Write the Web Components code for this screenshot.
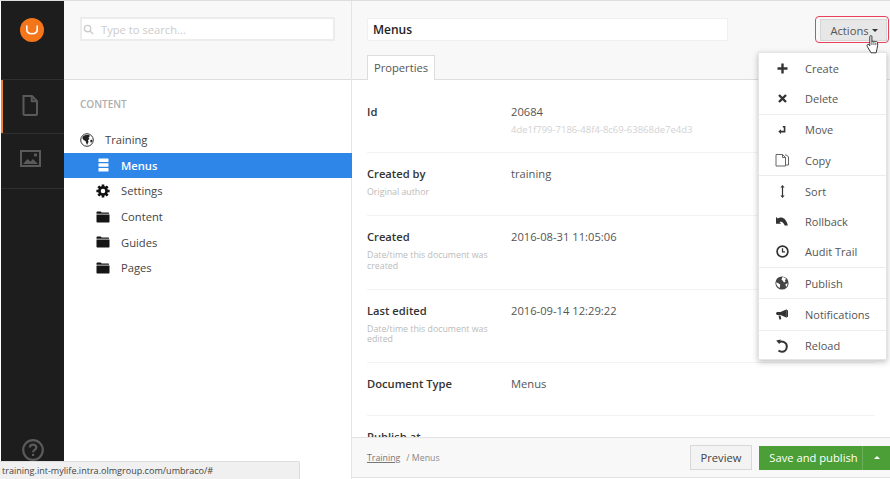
<!DOCTYPE html>
<html>
<head>
<meta charset="utf-8">
<title>Menus</title>
<style>
  html, body { margin: 0; height: 100%; overflow: hidden; background: #fff; }
  body { font-family: "Open Sans", "Liberation Sans", sans-serif; font-size: 11px; color: #555; }
</style>
</head>
<body>
<umb-app>
  <umb-sidebar slot="sidebar"></umb-sidebar>
  <umb-tree slot="tree">
    <tree-item icon="globe" root>Training</tree-item>
    <tree-item icon="list" active>Menus</tree-item>
    <tree-item icon="gear">Settings</tree-item>
    <tree-item icon="folder">Content</tree-item>
    <tree-item icon="folder">Guides</tree-item>
    <tree-item icon="folder">Pages</tree-item>
  </umb-tree>
  <umb-editor slot="editor">
    <prop-row label="Id" first>20684<div slot="sub">4de1f799-7186-48f4-8c69-63868de7e4d3</div></prop-row>
    <prop-row label="Created by" desc="Original author">training</prop-row>
    <prop-row label="Created" desc="Date/time this document was created">2016-08-31 11:05:06</prop-row>
    <prop-row label="Last edited" desc="Date/time this document was edited">2016-09-14 12:29:22</prop-row>
    <prop-row label="Document Type">Menus</prop-row>
    <prop-row label="Publish at"></prop-row>
  </umb-editor>
  <action-menu slot="overlay">
    <action-item icon="plus">Create</action-item>
    <action-item icon="cross" sep>Delete</action-item>
    <action-item icon="move">Move</action-item>
    <action-item icon="copy" sep>Copy</action-item>
    <action-item icon="sort">Sort</action-item>
    <action-item icon="rollback">Rollback</action-item>
    <action-item icon="clock" sep>Audit Trail</action-item>
    <action-item icon="world" sep>Publish</action-item>
    <action-item icon="megaphone" sep>Notifications</action-item>
    <action-item icon="reload">Reload</action-item>
  </action-menu>
  <status-bar slot="overlay">training.int-mylife.intra.olmgroup.com/umbraco/#</status-bar>
</umb-app>

<script>
const ICONS = {
  search: '<svg viewBox="0 0 12 12" fill="none" stroke="#ccc" stroke-width="1.5"><circle cx="5" cy="5" r="3.5"/><path d="M7.6 7.6L11 11"/></svg>',
  globe: '<svg viewBox="0 0 14 14"><circle cx="7" cy="7" r="6.3" fill="#fff" stroke="#333" stroke-width="1"/><path d="M2.5 4C4 2 7 1.4 9 2l1 1-1.5 1.5L9.5 6 8 7l.5 2-1.5 3-1-2.5L5.5 8 3.5 7 2.5 5.5zM10 7.5l2-1 .5 1.5-1.5 2z" fill="#222"/></svg>',
  list: '<svg viewBox="0 0 11 14" fill="#fff"><rect x="0.5" y="0.5" width="10" height="3.4" rx=".5"/><rect x="0.5" y="5.3" width="10" height="3.4" rx=".5"/><rect x="0.5" y="10.1" width="10" height="3.4" rx=".5"/></svg>',
  gear: '<svg viewBox="0 0 14 14" fill="none" stroke="#111"><circle cx="7" cy="7" r="3.6" stroke-width="2.6"/><path stroke-width="2.6" d="M7 .4v2.4M7 11.2v2.4M.4 7h2.4M11.2 7h2.4M2.3 2.3L4 4M10 10l1.7 1.7M11.7 2.3L10 4M4 10l-1.7 1.700"/></svg>',
  folder: '<svg viewBox="0 0 14 12" fill="#151515"><path d="M.5 1.2C.5.7.8.4 1.3.4h3.4l1 1.2h6.6c.5 0 .8.3.8.8v.3H.5z"/><path d="M.5 3.4h13v7.4c0 .5-.3.8-.8.8H1.3c-.5 0-.8-.3-.8-.8z"/></svg>',
  plus: '<svg viewBox="0 0 11 11" fill="none" stroke="#333" stroke-width="2.4"><path d="M5.5.5v10M.5 5.5h10"/></svg>',
  cross: '<svg viewBox="0 0 9 9" fill="none" stroke="#333" stroke-width="2.4"><path d="M1 1l7 7M8 1L1 8"/></svg>',
  move: '<svg viewBox="0 0 8 8" fill="none" stroke="#333" stroke-width="1.6"><path d="M4.800 .8h1.800v4.800H2"/><path d="M3 3.200L.3 5.600 3 8" fill="#333" stroke="none"/></svg>',
  copy: '<svg viewBox="0 0 14 14" fill="#fff" stroke="#555" stroke-width=".9"><path d="M10 2h1.5L13.5 4v8H11"/><path d="M1 1.5h6.5L10.5 4.5v8.5H1z"/><path d="M7.5 1.5v3h3" fill="none"/></svg>',
  sort: '<svg viewBox="0 0 5 13" fill="#333"><path d="M2.500 0L4.600 2.600H3.100v7.800h1.500L2.500 13 .4 10.400h1.500V2.600H.4z"/></svg>',
  rollback: '<svg viewBox="0 0 12 9" fill="#333"><path d="M0 0l1.800 1.500C3.400.4 5.200.2 7 1c2.400 1 3.900 3.600 4.900 7.500H8.700C8 6.600 7 5.400 5.900 5 5 4.700 4.200 4.800 3.600 5.200l1.600 1.500L0 6.800z"/></svg>',
  clock: '<svg viewBox="0 0 13 13" fill="none" stroke="#333"><circle cx="6.500" cy="6.500" r="5.400" stroke-width="1.700"/><path d="M6.500 3.200v3.600h2.600" stroke-width="1.300"/></svg>',
  world: '<svg viewBox="0 0 14 14"><circle cx="7" cy="7" r="6.600" fill="#444"/><path d="M7.500.9c1.600.2 3 1 4 2.200L9.800 4 10.600 5.600 9 6.600 7.800 4.800 6.500 3.400zM1.200 6.200l2.600 1.200 1.500 1.400-.7 3.200C2.700 11 1 9 1.200 6.200zM10.400 8.200l2.200-1c0 1.500-.6 2.700-1.500 3.700z" fill="#fff"/></svg>',
  megaphone: '<svg viewBox="0 0 12 11" fill="#333"><path d="M10.800 .2L4.500 3H1.600C.7 3 .1 3.600.1 4.500S.7 6 1.600 6h2.900l6.300 2.800z"/><rect x="11" y="1" width="1" height="7" rx=".5"/><path d="M2.500 6.600h2l.8 3.400-1.700.8z"/></svg>',
  reload: '<svg viewBox="0 0 12 14" fill="none" stroke="#333" stroke-width="2"><path d="M3.200 3.200C6 1.700 10.800 3 10.800 7.400c0 3-2.200 5.400-5 5.400-1.300 0-2.400-.4-3.300-1.200"/><path d="M4.800 .4L.2 1.400l3.200 3.900z" fill="#333" stroke="none"/></svg>',
  doc: '<svg viewBox="0 0 16 21" fill="none" stroke="#5a5a5a" stroke-width="2"><path d="M1.500 1h8.500l5 5.200V19a1 1 0 0 1-1 1H2.500a1 1 0 0 1-1-1z"/><path d="M9.800 1.200v5h5"/></svg>',
  image: '<svg viewBox="0 0 21 17"><rect x="1" y="1" width="19" height="15" fill="none" stroke="#5a5a5a" stroke-width="2"/><path d="M3 14l4.500-5 3 2.500L13 9l5 5z" fill="#5a5a5a"/><circle cx="15.500" cy="5" r="1.700" fill="#5a5a5a"/></svg>',
  help: '<svg viewBox="0 0 22 22" fill="none" stroke="#5a5a5a" stroke-width="2.200"><circle cx="11" cy="11" r="9.800"/><path d="M7.800 8.600c0-1.800 1.400-3 3.300-3s3.200 1.200 3.200 2.800c0 2.400-3.200 2.400-3.200 4.800"/><path d="M11.100 14.800v2.200"/></svg>',
  logo: '<svg viewBox="0 0 24 24"><circle cx="12" cy="12" r="12" fill="#f5761a"/><path d="M6.800 7.400v4.200c0 3 1.700 4.200 5.200 4.200s5.200-1.200 5.200-4.200V7.400" fill="none" stroke="#fff" stroke-width="1.600"/></svg>',
  hand: '<svg viewBox="0 0 14 19"><path d="M3.800 1.600c0-1.300 2.100-1.300 2.100 0v5.200c.2-1.100 1.900-1 2 .1.300-1 1.800-.9 1.900.2.400-.8 1.700-.6 1.800.5.200 1.900.1 4-.5 5.800L10.200 17.800H5L1.200 11.300c-.8-1.500.8-2.600 1.800-1.500l.8 1z" fill="#fff" stroke="#222" stroke-width=".9" stroke-linejoin="round"/><path d="M5.900 7v3M7.900 7v3M9.800 8v2.200" stroke="#222" stroke-width=".7"/></svg>'
};

class UmbIcon extends HTMLElement {
  connectedCallback() {
    if (this.shadowRoot) return;
    this.attachShadow({ mode: "open" });
    const w = this.getAttribute("w") || 14;
    const h = this.getAttribute("h") || 14;
    this.shadowRoot.innerHTML = `
      <style>
        :host { display: inline-flex; width: ${w}px; height: ${h}px; flex: none; }
        svg { width: 100%; height: 100%; display: block; }
      </style>
      ${ICONS[this.getAttribute("name")]}`;
  }
}

const appTemplate = document.createElement("template");
appTemplate.innerHTML = `
  <style>
    :host {
      display: grid;
      grid-template-columns: 63px 288px 1fr;
      height: 478px;
      border-top: 1px solid #ddd;
      padding-left: 1px;
      position: relative;
    }
  </style>
  <slot name="sidebar"></slot>
  <slot name="tree"></slot>
  <slot name="editor"></slot>
  <slot name="overlay"></slot>
`;
class UmbApp extends HTMLElement {
  constructor() {
    super();
    this.attachShadow({ mode: "open" });
    this.shadowRoot.appendChild(appTemplate.content.cloneNode(true));
  }
}

const sidebarTemplate = document.createElement("template");
sidebarTemplate.innerHTML = `
  <style>
    :host { display: flex; flex-direction: column; background: #1d1d1d; height: 460px; }
    .logo { height: 79px; display: flex; align-items: flex-start; justify-content: center; padding-top: 17px; padding-right: 1px; box-sizing: border-box; border-bottom: 1px solid #2f2f2f; }
    .sec { height: 54px; display: flex; align-items: center; justify-content: center; border-bottom: 1px solid #2f2f2f; box-sizing: border-box; padding-right: 5px; padding-bottom: 3px; }
    .sec.on { box-shadow: inset 2px 0 0 #f2813a; }
    .sec.pic { height: 55px; padding-bottom: 5px; padding-right: 4px; }
    .help { margin-top: auto; display: flex; justify-content: center; }
  </style>
  <div class="logo"><umb-icon name="logo" w="24" h="24"></umb-icon></div>
  <div class="sec on"><umb-icon name="doc" w="16" h="21"></umb-icon></div>
  <div class="sec pic"><umb-icon name="image" w="21" h="17"></umb-icon></div>
  <div class="help"><umb-icon name="help" w="22" h="22"></umb-icon></div>
`;
class UmbSidebar extends HTMLElement {
  constructor() {
    super();
    this.attachShadow({ mode: "open" });
    this.shadowRoot.appendChild(sidebarTemplate.content.cloneNode(true));
  }
}

const treeTemplate = document.createElement("template");
treeTemplate.innerHTML = `
  <style>
    :host { display: block; border-right: 1px solid #e4e4e4; box-sizing: border-box; }
    .head { height: 78px; box-sizing: border-box; background: #f8f8f8; padding: 16px 16px 0 16px; }
    .search {
      height: 24px; width: 255px; box-sizing: border-box; background: #fff; border: 2px solid #ececec;
      display: flex; align-items: center; gap: 7px; padding-left: 1px; color: #ccc; font-size: 11.2px;
    }
    .rule { height: 1px; background: #ddd; }
    h5 { margin: 0; padding: 17px 0 0 16px; height: 30px; font-size: 10px; line-height: 14px; font-weight: 600; color: #aeaeae; text-transform: uppercase; }
  </style>
  <div class="head"><div class="search"><umb-icon name="search" w="11" h="11"></umb-icon><span>Type to search...</span></div></div>
  <div class="rule"></div>
  <h5>Content</h5>
  <div><slot></slot></div>
`;
class UmbTree extends HTMLElement {
  constructor() {
    super();
    this.attachShadow({ mode: "open" });
    this.shadowRoot.appendChild(treeTemplate.content.cloneNode(true));
  }
}

class TreeItem extends HTMLElement {
  constructor() {
    super();
    this.attachShadow({ mode: "open" });
    const root = this.hasAttribute("root");
    const active = this.hasAttribute("active");
    this.shadowRoot.innerHTML = `
      <style>
        :host { display: flex; align-items: center; height: 25.6px; font-size: 11.2px; color: ${active ? "#fff" : "#444"};
                background: ${active ? "#2e86e8" : "transparent"}; ${active ? "font-weight: 600; margin-right: -1px;" : ""} }
        .ic { width: 14px; display: flex; justify-content: center; margin-left: ${root ? 16 : 32}px; margin-right: 11px; }
      </style>
      <span class="ic"><umb-icon name="${this.getAttribute("icon")}" w="${active ? 11 : 14}" h="${this.getAttribute("icon") === "folder" ? 12 : 14}"></umb-icon></span>
      <slot></slot>`;
  }
}

const editorTemplate = document.createElement("template");
editorTemplate.innerHTML = `
  <style>
    :host { display: flex; flex-direction: column; height: 477px; min-width: 0; }
    .head {
      height: 78px; box-sizing: border-box; background: #f8f8f8; padding: 17px 3px 0 15px;
      display: grid; grid-template-columns: 361px 1fr auto; grid-template-rows: 23px 1fr; row-gap: 14px;
    }
    .title {
      background: #fff; border: 1px solid #f0f0f0; box-sizing: border-box; height: 23px; padding-left: 5px;
      font-size: 12px; line-height: 21px; font-weight: 600; color: #222;
    }
    .btn {
      grid-column: 3; position: relative; width: 67px; height: 22px; margin-top: 1px; background: #e7e7e7; border: 1px solid #d6d6d6;
      box-sizing: border-box; padding-left: 1px; font-size: 11.2px; color: #555; display: flex; align-items: center; justify-content: center; gap: 3px;
    }
    .btn::before { content: ""; position: absolute; left: -6px; right: -3px; top: -4px; bottom: -3px; border: 1.5px solid #e8425a; border-radius: 4px; }
    .caret { width: 0; height: 0; border-left: 3px solid transparent; border-right: 3px solid transparent; border-top: 3px solid #333; }
    .hand { position: absolute; left: 45px; top: 15px; z-index: 3; }
    .tab {
      grid-row: 2; grid-column: 1; justify-self: start; width: 68px; height: 25px; box-sizing: border-box; background: #fff;
      border: 1px solid #ddd; border-bottom: 0; text-align: center; line-height: 24px; font-size: 11.2px; color: #555; position: relative; z-index: 1;
    }
    .rule { height: 1px; background: #ddd; flex: none; }
    .body { flex: 1; overflow: hidden; padding: 0 15px; min-height: 0; }
    .foot {
      flex: none; height: 41px; box-sizing: border-box; background: #f8f8f8; border-top: 1px solid #e2e2e2; border-bottom: 1px solid #e2e2e2;
      display: flex; align-items: center; padding-left: 15px; font-size: 8.8px; color: #888;
    }
    .crumb u { color: #777; }
    .crumb span { margin-left: 6px; }
    .preview { margin-left: auto; width: 62px; height: 25px; box-sizing: border-box; background: #f3f3f3; border: 1px solid #d8d8d8; font-size: 11.2px; color: #444; display: flex; align-items: center; justify-content: center; }
    .save { margin-left: 7px; height: 24px; width: 103px; box-sizing: border-box; padding-left: 6px; background: #4b9f36; color: #fff; font-size: 11.2px; display: flex; align-items: center; justify-content: center; }
    .more { height: 24px; width: 28px; box-sizing: border-box; border-left: 1px solid #6bb058; background: #4b9f36; display: flex; align-items: center; justify-content: center; }
    .up { width: 0; height: 0; border-left: 3px solid transparent; border-right: 3px solid transparent; border-bottom: 3px solid #fff; }
  </style>
  <div class="head">
    <div class="title">Menus</div>
    <div class="btn">Actions<span class="caret"></span><umb-icon class="hand" name="hand" w="14" h="19"></umb-icon></div>
    <div class="tab">Properties</div>
  </div>
  <div class="rule"></div>
  <div class="body"><slot></slot></div>
  <div class="foot">
    <div class="crumb"><u>Training</u><span>/ Menus</span></div>
    <div class="preview">Preview</div>
    <div class="save">Save and publish</div>
    <div class="more"><span class="up"></span></div>
  </div>
`;
class UmbEditor extends HTMLElement {
  constructor() {
    super();
    this.attachShadow({ mode: "open" });
    this.shadowRoot.appendChild(editorTemplate.content.cloneNode(true));
  }
}

class PropRow extends HTMLElement {
  constructor() {
    super();
    this.attachShadow({ mode: "open" });
    const desc = this.getAttribute("desc");
    const first = this.hasAttribute("first");
    this.shadowRoot.innerHTML = `
      <style>
        :host {
          display: grid; grid-template-columns: 144px 1fr; box-sizing: border-box; min-height: 53px;
          padding: ${first ? 23 : 12}px 0 ${first ? 17 : 17.3}px; border-bottom: 1px solid #f3f3f3;
          line-height: 18px; font-size: 11.2px;
        }
        .l { font-weight: 600; color: #333; }
        .d { font-size: 8.8px; line-height: 10.7px; color: #bbb; margin-top: 4px; width: 136px; font-weight: 400; }
        .v { color: #555; }
        ::slotted([slot="sub"]) { font-size: 9.5px; line-height: 11px; color: #d2d2d2; margin-top: 3px; }
      </style>
      <div class="l">${this.getAttribute("label")}${desc ? `<div class="d">${desc}</div>` : ""}</div>
      <div class="v"><slot></slot><slot name="sub"></slot></div>`;
  }
}

const menuTemplate = document.createElement("template");
menuTemplate.innerHTML = `
  <style>
    :host {
      position: absolute; left: 758px; top: 51px; width: 129px; height: 308px; box-sizing: border-box; background: #fff;
      border: 1px solid #e4e4e4; box-shadow: 0 2px 6px rgba(0,0,0,.25); z-index: 2;
    }
  </style>
  <slot></slot>
`;
class ActionMenu extends HTMLElement {
  constructor() {
    super();
    this.attachShadow({ mode: "open" });
    this.shadowRoot.appendChild(menuTemplate.content.cloneNode(true));
  }
}

const ICON_SIZE = {
  plus: [11, 11], cross: [9, 9], move: [8, 8], copy: [14, 14], sort: [5, 13], rollback: [12, 9],
  clock: [13, 13], world: [14, 14], megaphone: [12, 11], reload: [12, 14]
};
class ActionItem extends HTMLElement {
  constructor() {
    super();
    this.attachShadow({ mode: "open" });
    const name = this.getAttribute("icon");
    const [w, h] = ICON_SIZE[name];
    this.shadowRoot.innerHTML = `
      <style>
        :host {
          display: flex; align-items: center; height: 30.3px; font-size: 11px; color: #555;
          ${this.hasAttribute("sep") ? "border-bottom: 1px solid #ececec;" : ""}
        }
        .ic { width: 46px; display: flex; justify-content: center; }
      </style>
      <span class="ic"><umb-icon name="${name}" w="${w}" h="${h}"></umb-icon></span>
      <slot></slot>`;
  }
}

class StatusBar extends HTMLElement {
  constructor() {
    super();
    this.attachShadow({ mode: "open" });
    this.shadowRoot.innerHTML = `
      <style>
        :host {
          position: absolute; left: 0; bottom: 0; width: 300px; height: 18px; box-sizing: border-box; background: #f0f0f0;
          border-top: 1px solid #ddd; border-right: 1px solid #ddd; border-top-right-radius: 2px; padding-left: 2px;
          font-size: 9.05px; line-height: 17px; color: #444; z-index: 2; white-space: nowrap;
        }
      </style>
      <slot></slot>`;
  }
}

customElements.define("umb-icon", UmbIcon);
customElements.define("tree-item", TreeItem);
customElements.define("prop-row", PropRow);
customElements.define("action-item", ActionItem);
customElements.define("action-menu", ActionMenu);
customElements.define("status-bar", StatusBar);
customElements.define("umb-sidebar", UmbSidebar);
customElements.define("umb-tree", UmbTree);
customElements.define("umb-editor", UmbEditor);
customElements.define("umb-app", UmbApp);
</script>
</body>
</html>
